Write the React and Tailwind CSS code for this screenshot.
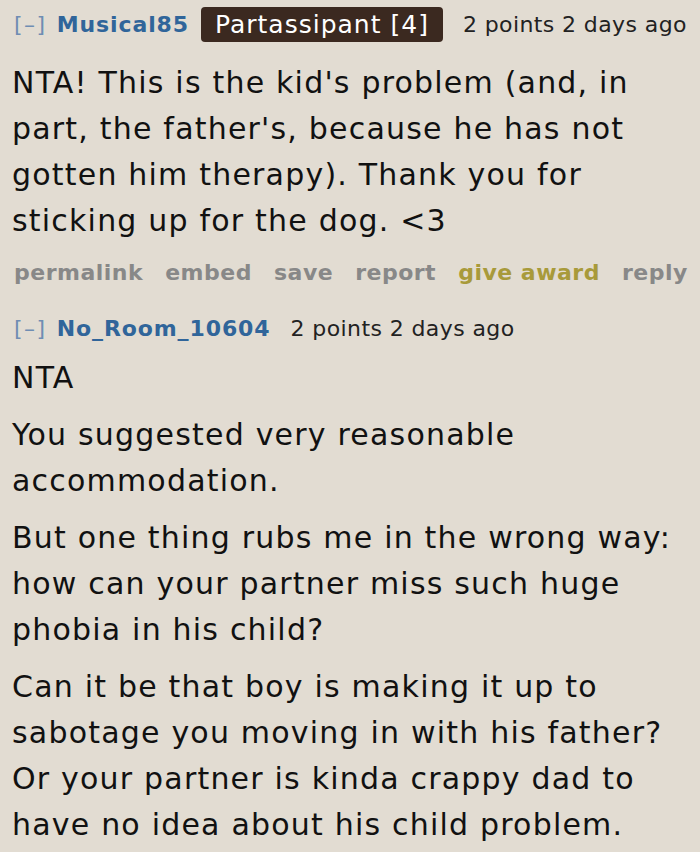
import React from 'react';

const font = { fontFamily: '"DejaVu Sans", Verdana, sans-serif' };

const Header = ({ user, flair, meta }) => (
    <div className="flex items-center h-[48px] text-[22px] tracking-[0.6px] whitespace-nowrap">
        <span className="text-[#6f8db3] ml-[2px] mr-[10px] tracking-[1.5px]">[–]</span>
        <span className="font-bold text-[#30659a] tracking-[0.9px]">{user}</span>
        {flair && (
            <span className="ml-[12px] bg-[#3b2920] text-white text-[25px] tracking-[1px] leading-[35px] px-[14px] rounded-[4px]">
                {flair}
            </span>
        )}
        <span className="ml-[20px] text-[#222] tracking-[0.4px]">{meta}</span>
    </div>
);

const Actions = () => (
    <div className="flex gap-[22px] pl-[2px] text-[22px] tracking-[0.5px] font-bold text-[#888] whitespace-nowrap mt-[12px] mb-[15px]">
        <span>permalink</span>
        <span>embed</span>
        <span>save</span>
        <span>report</span>
        <span className="text-[#a89a3a]">give award</span>
        <span>reply</span>
    </div>
);

export default function App() {
    return (
        <div style={font} className="w-[700px] h-[852px] bg-[#e2dcd2] px-[12px] overflow-hidden">
            <Header user="Musical85" flair="Partassipant [4]" meta="2 points 2 days ago" />
            <div className="text-[30px] tracking-[1.2px] leading-[46px] text-[#111] mt-[12px]">
                <p>NTA! This is the kid's problem (and, in part, the father's, because he has not gotten him therapy). Thank you for sticking up for the dog. &lt;3</p>
            </div>
            <Actions />
            <Header user="No_Room_10604" meta="2 points 2 days ago" />
            <div className="text-[30px] tracking-[1.2px] leading-[46px] text-[#111] mt-[3px] flex flex-col gap-[11px]">
                <p>NTA</p>
                <p>You suggested very reasonable accommodation.</p>
                <p>But one thing rubs me in the wrong way: how can your partner miss such huge phobia in his child?</p>
                <p>Can it be that boy is making it up to sabotage you moving in with his father? Or your partner is kinda crappy dad to have no idea about his child problem.</p>
            </div>
        </div>
    );
}
